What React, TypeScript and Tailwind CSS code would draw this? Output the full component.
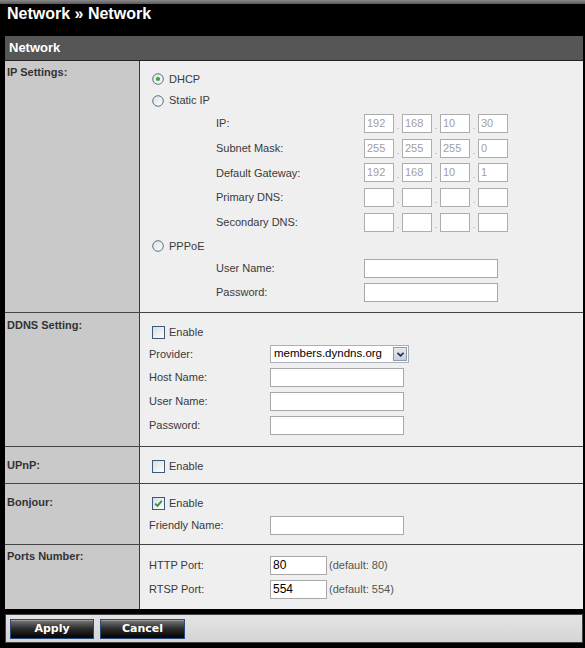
import React from "react";

const Radio = ({ checked = false }: { checked?: boolean }) => (
  <svg width="12" height="12" viewBox="0 0 12 12" className="ml-[3px] shrink-0">
    <defs>
      <linearGradient id="rg" x1="0" y1="0" x2="1" y2="1">
        <stop offset="0" stopColor="#d9dde3" />
        <stop offset="1" stopColor="#ffffff" />
      </linearGradient>
    </defs>
    <circle cx="6" cy="6" r="5.3" fill="url(#rg)" stroke="#5f7084" strokeWidth="1" />
    {checked && <circle cx="6" cy="6" r="2.1" fill="#3aa63a" />}
  </svg>
);

const Check = ({ checked = false }: { checked?: boolean }) => (
  <svg width="13" height="13" viewBox="0 0 13 13" className="ml-[3px] shrink-0">
    <defs>
      <linearGradient id="cg" x1="0" y1="0" x2="1" y2="1">
        <stop offset="0" stopColor="#d6dbe4" />
        <stop offset="1" stopColor="#ffffff" />
      </linearGradient>
    </defs>
    <rect x="0.5" y="0.5" width="12" height="12" fill="url(#cg)" stroke="#3f5878" strokeWidth="1" />
    {checked && (
      <path d="M3.2 6.6 L5.4 8.8 L9.8 3.8" fill="none" stroke="#2f9a2f" strokeWidth="1.9" />
    )}
  </svg>
);

const Box = ({ w, value = "", gray = false }: { w: string; value?: string; gray?: boolean }) => (
  <div
    className={`${w} h-[19px] bg-white border border-[#a8a8a8] pl-[2px] flex items-center text-[11px] leading-none ${
      gray ? "text-[#9c9c9c]" : "text-black text-[12px]"
    }`}
  >
    {value}
  </div>
);

const IpLine = ({ label, vals }: { label: string; vals: string[] }) => (
  <div className="flex items-center h-[24.75px]">
    <div className="ml-[67px] w-[148px] text-[11px] text-[#3a3a3a]">{label}</div>
    {vals.map((v, i) => (
      <React.Fragment key={i}>
        {i > 0 && (
          <div className="w-[8px] h-[19px] flex items-end justify-center text-[9px] leading-[14px] text-[#999]">.</div>
        )}
        <div className="w-[30px] h-[19px] bg-white border border-[#adadad] pl-[2px] flex items-center text-[11px] text-[#a0a0a0] leading-none">
          {v}
        </div>
      </React.Fragment>
    ))}
  </div>
);

const Row = ({
  label,
  lpt,
  h,
  border = true,
  children,
}: {
  label: string;
  lpt: string;
  h: string;
  border?: boolean;
  children: React.ReactNode;
}) => (
  <div className={`flex ${border ? "border-b border-[#444]" : ""}`}>
    <div
      className={`w-[135px] shrink-0 bg-[#c9c9c9] border-r border-[#3a3a3a] pl-[2px] ${lpt} text-[11px] leading-[13px] font-bold text-[#333]`}
    >
      {label}
    </div>
    <div className={`flex-1 bg-[#efefef] pl-[9px] ${h} flex flex-col`}>{children}</div>
  </div>
);

const FieldLine = ({ label, h, children }: { label: string; h: string; children: React.ReactNode }) => (
  <div className={`flex items-center ${h}`}>
    <div className="w-[121px] text-[11px] text-[#3a3a3a]">{label}</div>
    {children}
  </div>
);

const Btn = ({ label, w }: { label: string; w: string }) => (
  <div
    className={`${w} h-[20px] border border-[#2b4a7c] bg-gradient-to-b from-[#7a7a7a] via-[#2a2a2a] to-[#050505] flex items-center justify-center text-white font-bold text-[11px] font-['DejaVu_Sans',sans-serif] shadow-[inset_0_1px_0_#9a9a9a]`}
  >
    {label}
  </div>
);

export default function App() {
  return (
    <div className="w-[585px] h-[648px] bg-black overflow-hidden font-['Liberation_Sans',Arial,sans-serif]">
      <div className="h-[4px] bg-gradient-to-b from-[#8a8a8a] to-[#5a5a5a]" />
      <div className="h-[32px] pl-[7px] pt-[1px] text-white font-bold text-[16px] leading-[18px]">
        Network » Network
      </div>
      <div className="ml-[5px] mr-[2px]">
        <div className="h-[25px] bg-[#565656] border-b border-[#222] pl-[4px] text-white font-bold text-[13px] leading-[24px]">
          Network
        </div>

        <Row label="IP Settings:" lpt="pt-[5px]" h="h-[251px] pt-[7px]">
          <div className="flex items-center h-[22px]">
            <Radio checked />
            <span className="ml-[5px] text-[11px] text-[#3a3a3a]">DHCP</span>
          </div>
          <div className="flex items-center h-[21px]">
            <Radio />
            <span className="ml-[5px] text-[11px] text-[#3a3a3a]">Static IP</span>
          </div>
          <IpLine label="IP:" vals={["192", "168", "10", "30"]} />
          <IpLine label="Subnet Mask:" vals={["255", "255", "255", "0"]} />
          <IpLine label="Default Gateway:" vals={["192", "168", "10", "1"]} />
          <IpLine label="Primary DNS:" vals={["", "", "", ""]} />
          <IpLine label="Secondary DNS:" vals={["", "", "", ""]} />
          <div className="flex items-center h-[22px]">
            <Radio />
            <span className="ml-[5px] text-[11px] text-[#3a3a3a]">PPPoE</span>
          </div>
          <div className="flex items-center h-[23.5px]">
            <div className="ml-[67px] w-[148px] text-[11px] text-[#3a3a3a]">User Name:</div>
            <Box w="w-[134px]" />
          </div>
          <div className="flex items-center h-[24px]">
            <div className="ml-[67px] w-[148px] text-[11px] text-[#3a3a3a]">Password:</div>
            <Box w="w-[134px]" />
          </div>
        </Row>

        <Row label="DDNS Setting:" lpt="pt-[6px]" h="h-[133px] pt-[8px]">
          <div className="flex items-center h-[22px]">
            <Check />
            <span className="ml-[4px] text-[11px] text-[#3a3a3a]">Enable</span>
          </div>
          <FieldLine label="Provider:" h="h-[22px]">
            <div className="w-[139px] h-[18px] bg-white border border-[#a9b0b8] flex items-center">
              <span className="flex-1 pl-[3px] text-[11.5px] text-black leading-none">members.dyndns.org</span>
              <div className="w-[14px] h-[14px] mr-[1px] bg-gradient-to-b from-[#e6e9ee] to-[#c9d0da] border border-[#8d9bb0] flex items-center justify-center">
                <svg width="7" height="5" viewBox="0 0 7 5">
                  <path d="M0.5 0.8 L3.5 3.8 L6.5 0.8" fill="none" stroke="#1c2a48" strokeWidth="1.6" />
                </svg>
              </div>
            </div>
          </FieldLine>
          <FieldLine label="Host Name:" h="h-[24px]">
            <Box w="w-[134px]" />
          </FieldLine>
          <FieldLine label="User Name:" h="h-[24px]">
            <Box w="w-[134px]" />
          </FieldLine>
          <FieldLine label="Password:" h="h-[24px]">
            <Box w="w-[134px]" />
          </FieldLine>
        </Row>

        <Row label="UPnP:" lpt="pt-[12px]" h="h-[36px] pt-[8px]">
          <div className="flex items-center h-[22px]">
            <Check />
            <span className="ml-[4px] text-[11px] text-[#3a3a3a]">Enable</span>
          </div>
        </Row>

        <Row label="Bonjour:" lpt="pt-[12px]" h="h-[60px] pt-[8px]">
          <div className="flex items-center h-[22px]">
            <Check checked />
            <span className="ml-[4px] text-[11px] text-[#3a3a3a]">Enable</span>
          </div>
          <FieldLine label="Friendly Name:" h="h-[22px]">
            <Box w="w-[134px]" />
          </FieldLine>
        </Row>

        <Row label="Ports Number:" lpt="pt-[5px]" h="h-[64px] pt-[8px]" border={false}>
          <FieldLine label="HTTP Port:" h="h-[24px]">
            <Box w="w-[57px]" value="80" />
            <span className="ml-[2px] text-[11px] text-[#555]">(default: 80)</span>
          </FieldLine>
          <FieldLine label="RTSP Port:" h="h-[24px]">
            <Box w="w-[57px]" value="554" />
            <span className="ml-[2px] text-[11px] text-[#555]">(default: 554)</span>
          </FieldLine>
        </Row>

        <div className="mt-[5px] h-[29px] border border-[#444] bg-gradient-to-b from-[#e4e4e4] to-[#d4d4d4] pl-[4px] pt-[4px] flex gap-[6px]">
          <Btn label="Apply" w="w-[84px]" />
          <Btn label="Cancel" w="w-[85px]" />
        </div>
      </div>
    </div>
  );
}
